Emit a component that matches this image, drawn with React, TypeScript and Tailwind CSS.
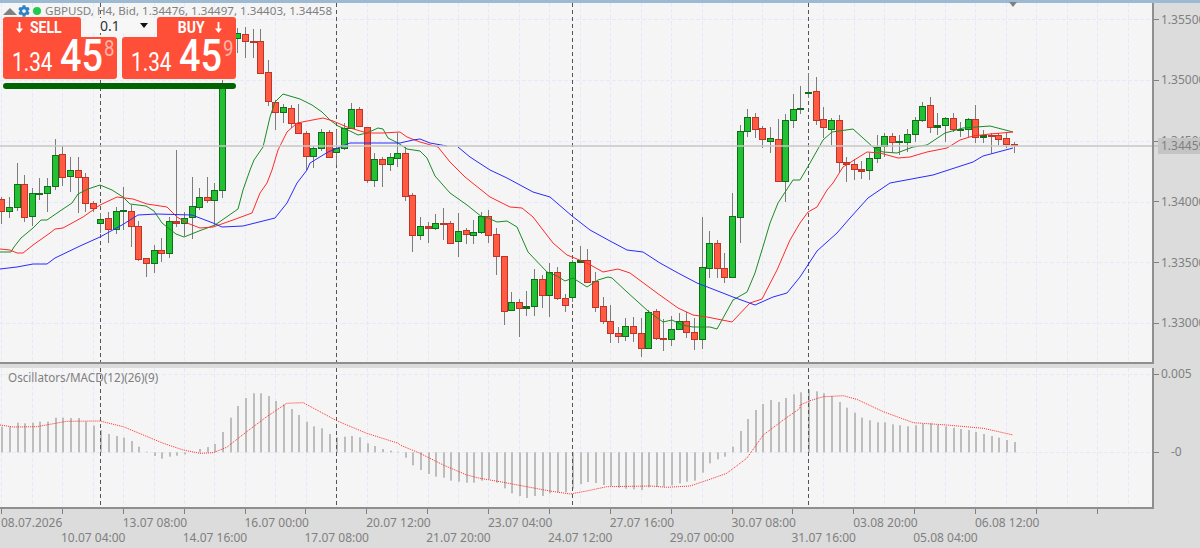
import React from "react";
import { FaCog } from "react-icons/fa";

type C = [number, number, number, number, number];
const candles: C[] = [
[0,199,211,197,224],[1,207,211,197,218],[1,184,207,163,211],[0,184,217,175,222],[1,193,216,188,226],[1,193,194,178,200],[1,186,193,178,212],[1,155,186,139,190],[0,154,177,146,186],[1,170,176,157,192],
[0,170,177,157,213],[0,177,203,173,212],[0,203,208,201,212],[1,219,223,213,233],[0,218,229,212,243],[1,211,229,207,234],[1,210,211,187,230],[0,211,226,205,247],[0,226,259,221,261],[0,258,263,258,277],
[1,250,263,245,273],[0,250,253,238,262],[1,221,253,217,258],[0,221,223,150,227],[1,218,223,212,236],[1,206,217,177,239],[1,197,207,188,210],[0,197,200,177,203],[1,190,200,183,225],[1,88,190,80,198],
[1,30,40,25,45],[1,33,38,28,53],[0,34,41,27,58],[0,41,42,29,58],[0,41,73,29,73],[0,72,101,60,106],[0,102,112,100,130],[1,107,112,104,123],[0,108,123,105,128],[0,123,133,104,133],
[0,133,156,131,170],[1,148,156,146,168],[1,132,148,129,151],[0,132,157,130,157],[1,148,152,130,165],[1,128,148,123,150],[1,109,128,103,128],[0,109,126,107,126],[0,127,180,127,183],[1,159,180,153,187],
[0,159,164,157,187],[1,157,164,153,171],[1,153,158,133,167],[0,153,196,147,201],[0,195,235,193,252],[1,226,235,217,240],[0,226,228,222,243],[1,223,228,214,230],[0,223,224,208,240],[0,223,243,221,244],
[1,231,241,213,257],[0,230,234,228,244],[1,232,235,220,244],[1,216,232,212,234],[0,216,235,210,243],[0,234,256,228,275],[0,256,311,256,325],[1,302,310,292,311],[0,302,308,299,337],[1,306,308,291,316],
[1,279,306,269,316],[0,279,295,275,308],[1,272,295,263,317],[0,272,298,267,300],[0,298,305,294,312],[1,262,297,260,302],[1,260,262,246,262],[0,260,282,249,282],[0,281,307,272,312],[0,306,321,297,324],
[0,321,333,305,343],[0,333,336,327,343],[1,326,336,318,341],[0,326,333,317,342],[0,333,348,318,357],[1,312,348,310,349],[0,311,338,309,340],[0,338,339,319,351],[1,329,339,316,346],[1,321,329,313,330],
[0,321,332,312,338],[0,332,339,318,350],[1,267,339,217,349],[1,243,268,231,278],[0,243,268,240,278],[0,268,277,253,283],[1,216,277,193,277],[1,131,217,125,243],[1,117,131,109,137],[0,117,129,113,138],
[0,128,139,126,148],[1,138,141,127,153],[0,139,181,119,181],[1,120,181,114,202],[1,109,120,94,128],[1,108,109,86,114],[1,92,93,73,98],[0,91,120,77,125],[0,119,127,107,138],[1,120,129,118,145],
[0,120,162,115,173],[0,162,164,157,182],[0,164,169,159,180],[0,169,171,161,179],[1,158,170,153,180],[1,147,158,135,163],[1,136,146,133,157],[0,136,142,133,153],[1,141,142,135,155],[1,134,142,129,152],
[1,120,134,117,142],[1,106,120,102,122],[0,105,127,97,133],[1,125,127,113,135],[1,118,125,117,142],[0,118,129,113,132],[1,129,130,122,137],[1,119,129,118,137],[0,119,137,105,143],[1,135,137,130,143],
[0,135,136,133,153],[0,135,139,133,145],[0,138,144,132,148],[0,144,145,142,153],
];

const green = "0,252 11,252 14,247 21,238 33,228 41,220 47,220 60,211 72,203 78,194 88,189 100,185 112,190 123,197 130,204 146,206 154,211 162,223 176,234 184,237 199,231 215,225 238,209 243,190 250,170 254,160 263,147 270,117 275,102 283,94 300,99 312,105 322,112 330,120 338,126 350,131 358,135 367,133 378,128 383,129 388,138 398,143 407,149 420,151 427,158 435,176 450,193 467,205 482,217 488,218 497,222 507,221 517,227 528,252 547,272 557,276 565,281 573,278 587,287 598,280 608,277 612,278 627,292 648,311 663,322 672,320 682,325 693,327 710,327 717,329 733,300 747,292 755,273 765,240 770,223 778,203 793,180 800,180 810,163 823,140 832,132 853,129 873,147 883,152 897,153 913,147 927,145 945,133 963,128 990,126 1013,132";
const red = "0,249 10,250 17,253 23,253 33,245 50,233 55,229 63,228 83,217 100,205 117,197 133,199 147,204 167,207 177,217 187,223 200,228 213,227 233,220 252,213 260,193 267,183 272,170 278,150 287,132 297,123 323,118 333,121 347,127 367,133 383,133 400,132 407,137 420,142 438,147 450,162 465,177 490,197 510,207 522,208 533,217 553,243 567,255 587,263 603,272 618,269 630,273 657,293 678,308 693,315 707,317 732,322 750,303 762,299 777,270 790,240 800,223 808,212 817,207 827,190 833,183 843,167 867,152 880,153 898,158 910,157 927,152 947,148 960,140 973,136 990,134 1013,132";
const blue1 = "0,269 17,267 33,264 47,264 55,258 80,246 100,237 122,225 138,215 157,214 192,215 213,223 222,227 243,226 275,218 287,203 297,183 307,170 310,163 328,152 350,143 367,143 400,143 413,140 420,139 430,143 447,146";
const blue2 = "458,147 470,157 490,170 507,178 533,192 550,197 572,216 590,230 610,241 627,250 643,252 660,263 678,273 697,283 710,288 733,297 755,305 773,297 787,293 800,277 817,251 837,233 850,218 868,198 890,183 933,175 973,162 983,156 1013,148";
const hist: number[] = [200,200,188,190,188,185,185,173,173,174,174,185,197,210,222,228,233,243,260,275,288,296,290,287,283,277,267,261,252,216,173,138,114,100,100,108,123,133,147,165,185,199,205,222,232,230,228,232,250,258,267,272,275,293,316,330,342,350,353,362,365,368,368,362,358,368,385,400,408,414,408,408,400,397,397,386,372,366,369,375,378,383,386,388,390,382,380,380,376,370,365,362,338,310,298,290,260,213,177,150,132,120,126,114,103,97,88,94,100,108,126,143,158,173,181,187,187,193,196,199,196,192,190,195,199,203,207,210,216,222,228,233,240,246];
const sig6 = [[0,195],[40,201],[110,200],[150,193],[200,184],[300,183],[370,200],[430,225],[490,250],[550,270],[600,280],[640,278],[680,262],[740,215],[800,170],[860,130],[910,128],[1010,182],[1100,220],[1195,250]];
const sig7 = [[0,255],[60,280],[130,315],[200,345],[240,355],[300,365],[380,380],[450,393],[510,402],[560,393],[620,380],[750,378],[800,382],[870,378],[930,358],[980,340],[1040,295],[1090,225],[1150,180],[1200,145]];
const sig8 = [[0,135],[30,122],[70,110],[130,107],[170,118],[250,155],[340,188],[440,195],[550,205],[640,225]];
const signal = [...sig6.map(([x, y]) => [x / 3, y]), ...sig7.map(([x, y]) => [400 + x / 3, y]), ...sig8.map(([x, y]) => [800 + x / 3, y])]
  .map(([x, y]) => `${x.toFixed(1)},${(360 + y / 3).toFixed(1)}`).join(" ");

const cx = (i: number) => 1.4 + 7.61 * i;
const vGrid = Array.from({ length: 38 }, (_, k) => Math.round(1.4 + 30.44 * k) + 0.5);
const dashes = [100.5, 336.5, 572.5, 808.5];
const GRID = "#e8e8fb";
const row1 = ["08.07.2026", "13.07 08:00", "16.07 00:00", "20.07 12:00", "23.07 04:00", "27.07 16:00", "30.07 08:00", "03.08 20:00", "06.08 12:00"];
const row2 = ["10.07 04:00", "14.07 16:00", "17.07 08:00", "21.07 20:00", "24.07 12:00", "29.07 00:00", "31.07 16:00", "05.08 04:00"];
const prices = ["1.35500", "1.35000", "1.34500", "1.34000", "1.33500", "1.33000"];

function MainChart() {
  return (
    <svg width={1152} height={359} viewBox="0 3 1152 359" className="block flex-none bg-[#f5f5f5]">
      {vGrid.map((x) => <line key={x} x1={x} x2={x} y1={3} y2={362} stroke={GRID} strokeDasharray="4 2" />)}
      {[19.5, 80.5, 141.5, 202.5, 262.5, 323.5].map((y) => <line key={y} x1={0} x2={1152} y1={y} y2={y} stroke={GRID} strokeDasharray="4 2" />)}
      {dashes.map((x) => <line key={x} x1={x} x2={x} y1={3} y2={362} stroke="#555" strokeDasharray="4 3" />)}
      {candles.map(([g, t, b, wt, wb], i) => {
        const x = Math.round(cx(i)) + 0.5;
        const doji = b - t <= 2;
        return (
          <g key={i}>
            <line x1={x} x2={x} y1={wt} y2={wb} stroke="#7c7c7c" />
            <rect x={x - 3} y={t + 0.5} width={6} height={Math.max(b - t, 1)} fill={g ? (doji ? "#0d6b14" : "#22c032") : doji ? "#d63a2a" : "#ff5a42"} stroke={g ? "#0f6e1a" : "#bf3328"} />
          </g>
        );
      })}
      <polyline points={green} fill="none" stroke="#1c8a24" strokeWidth={1} />
      <polyline points={red} fill="none" stroke="#ff2a2a" strokeWidth={1} />
      <polyline points={blue1} fill="none" stroke="#2a2aff" strokeWidth={1} />
      <polyline points={blue2} fill="none" stroke="#2a2aff" strokeWidth={1} />
      <line x1={0} x2={1152} y1={146} y2={146} stroke="#c6c6c6" strokeWidth={1.5} />
    </svg>
  );
}

function Oscillator() {
  return (
    <svg width={1152} height={139} viewBox="0 368 1152 139" className="block flex-none bg-[#f5f5f5]">
      {vGrid.map((x) => <line key={x} x1={x} x2={x} y1={368} y2={507} stroke={GRID} strokeDasharray="4 2" />)}
      {[374.5, 452.5].map((y) => <line key={y} x1={0} x2={1152} y1={y} y2={y} stroke={GRID} strokeDasharray="4 2" />)}
      {hist.map((v, i) => {
        const x = Math.round(cx(i));
        const y = 360 + v / 3;
        return <rect key={i} x={x} y={Math.min(y, 452.3)} width={2} height={Math.abs(y - 452.3)} fill="#bdbdbd" />;
      })}
      {dashes.map((x) => <line key={x} x1={x} x2={x} y1={368} y2={505} stroke="#555" strokeDasharray="4 3" />)}
      <polyline points={signal} fill="none" stroke="#ff2a2a" strokeWidth={1} strokeDasharray="1 1" />
    </svg>
  );
}

function Arrow() {
  return (
    <svg width={7} height={11} viewBox="0 0 7 11" className="flex-none">
      <path d="M2.6 0h1.8v6.5H7L3.5 11 0 6.5h2.6z" fill="#fff" />
    </svg>
  );
}

function Quote({ big, tail }: { big: string; tail: string }) {
  return (
    <div className="flex items-start h-[42px] text-white font-['Roboto',sans-serif] leading-none">
      <span className="w-[46px] mt-[12px] text-[26px] origin-left scale-x-[0.8] flex-none ml-[9px]">1.34</span>
      <span className="w-[44px] -mt-[4px] ml-[2px] text-[45px] font-medium origin-left scale-x-[0.84] flex-none">{big}</span>
      <span className="mt-px text-[22px] origin-left scale-x-[0.85] text-[#ffb3a8]">{tail}</span>
    </div>
  );
}

function TradePanel() {
  return (
    <div className="absolute left-[3px] top-[17px] w-[233px] font-['Roboto',sans-serif]">
      <div className="flex h-[62px] gap-[5px]">
        <div className="w-[114px] flex-none flex flex-col">
          <div className="w-[78px] h-[20px] bg-[#ff4f38] rounded-t-[3px] flex items-center pl-[13px] gap-[7px] text-white">
            <Arrow />
            <span className="text-[17px] font-bold origin-left scale-x-[0.82] leading-none">SELL</span>
          </div>
          <div className="bg-[#ff4f38] rounded-b-[3px] rounded-tr-[3px] h-[42px]">
            <Quote big="45" tail="8" />
          </div>
        </div>
        <div className="w-[114px] flex-none flex flex-col items-end relative">
          <div className="w-[79px] h-[20px] bg-[#ff4f38] rounded-t-[3px] flex items-center justify-end pr-[14px] gap-[10px] text-white">
            <span className="text-[17px] font-bold origin-right scale-x-[0.82] leading-none">BUY</span>
            <Arrow />
          </div>
          <div className="bg-[#ff4f38] rounded-b-[3px] rounded-tl-[3px] h-[42px] w-full">
            <Quote big="45" tail="9" />
          </div>
          <div className="absolute left-[-37px] top-[1px] w-[71px] h-[15px] bg-[#f7f7f7] rounded-[2px] flex items-center pl-[15px] text-[14px] leading-none text-[#333] font-['Noto_Sans',sans-serif]">
            <span className="w-[40px] flex-none">0.1</span>
            <svg width={8} height={5} viewBox="0 0 8 5" className="flex-none"><path d="M0 0h8L4 5z" fill="#111" /></svg>
          </div>
        </div>
      </div>
      <div className="mt-[4px] h-[6px] rounded-full bg-[#006400]" />
    </div>
  );
}

export default function App() {
  return (
    <div className="relative w-[1200px] h-[548px] overflow-hidden bg-[#dcdcdc] font-['Noto_Sans',sans-serif] text-[12px] leading-none text-[#808080]">
      <div className="h-[3px] bg-[#9dbad3]" />
      <div className="flex h-[361px]">
        <div className="flex-none w-[1154px] border-r-2 border-b-2 border-[#8f8f8f]">
          <MainChart />
        </div>
        <div className="flex-1 min-w-0 flex flex-col gap-[46.8px] pt-[9.5px] relative overflow-hidden">
          {prices.map((p) => (
            <div key={p} className="flex items-center h-[14px] flex-none">
              <span className="w-[5px] h-px bg-[#808080] flex-none" />
              <span className="ml-[2px] whitespace-nowrap">{p}</span>
            </div>
          ))}
          <div className="absolute left-[4px] top-[135px] w-[42px] h-[16px] bg-[#c4c4c4] flex items-center pl-[3px] overflow-hidden whitespace-nowrap">1.34459</div>
          <div className="absolute left-0 top-[142px] w-[4px] h-[2px] bg-[#c6c6c6]" />
        </div>
      </div>
      <div className="h-[4px]" />
      <div className="flex h-[141px]">
        <div className="relative flex-none w-[1154px] h-[141px] border-r-2 border-b-2 border-[#8f8f8f]">
          <Oscillator />
          <span className="absolute left-[8px] top-[3px] text-[11.7px] leading-[12px] whitespace-nowrap">Oscillators/MACD(12)(26)(9)</span>
        </div>
        <div className="flex-1 flex flex-col">
          <div className="flex items-center h-[12px]">
            <span className="w-[5px] h-px bg-[#808080] flex-none" />
            <span className="ml-[2px]">0.005</span>
          </div>
          <div className="flex items-center h-[12px] mt-[66px]">
            <span className="w-[5px] h-px bg-[#808080] flex-none" />
            <span className="ml-[12px]">-0</span>
          </div>
        </div>
      </div>
      <div className="flex pl-px h-[5px]">
        {Array.from({ length: 19 }, (_, k) => (
          <span key={k} className="w-[60.88px] flex-none border-l border-[#808080]" />
        ))}
      </div>
      <div className="flex pl-px mt-px h-[15px] items-center">
        {row1.map((t) => <span key={t} className="w-[121.76px] flex-none whitespace-nowrap">{t}</span>)}
      </div>
      <div className="flex pl-[61px] h-[15px] items-center">
        {row2.map((t) => <span key={t} className="w-[121.76px] flex-none whitespace-nowrap">{t}</span>)}
      </div>
      <div className="absolute left-[1009px] top-[2px] w-0 h-0 border-l-[4px] border-r-[4px] border-t-[5px] border-l-transparent border-r-transparent border-t-[#808080]" />
      <div className="absolute left-[3px] top-[6px] flex items-center h-[10px] whitespace-nowrap">
        <span className="w-0 h-0 border-l-[7px] border-r-[7px] border-b-[7px] border-l-transparent border-r-transparent border-b-[#808080]" />
        <FaCog className="ml-[1px] text-[#2f83c4] text-[12px]" />
        <span className="ml-[3px] w-[8px] h-[8px] rounded-full bg-[#22c94a]" />
        <span className="ml-[4px] text-[11.6px]">GBPUSD, H4, Bid, 1.34476, 1.34497, 1.34403, 1.34458</span>
      </div>
      <TradePanel />
    </div>
  );
}
